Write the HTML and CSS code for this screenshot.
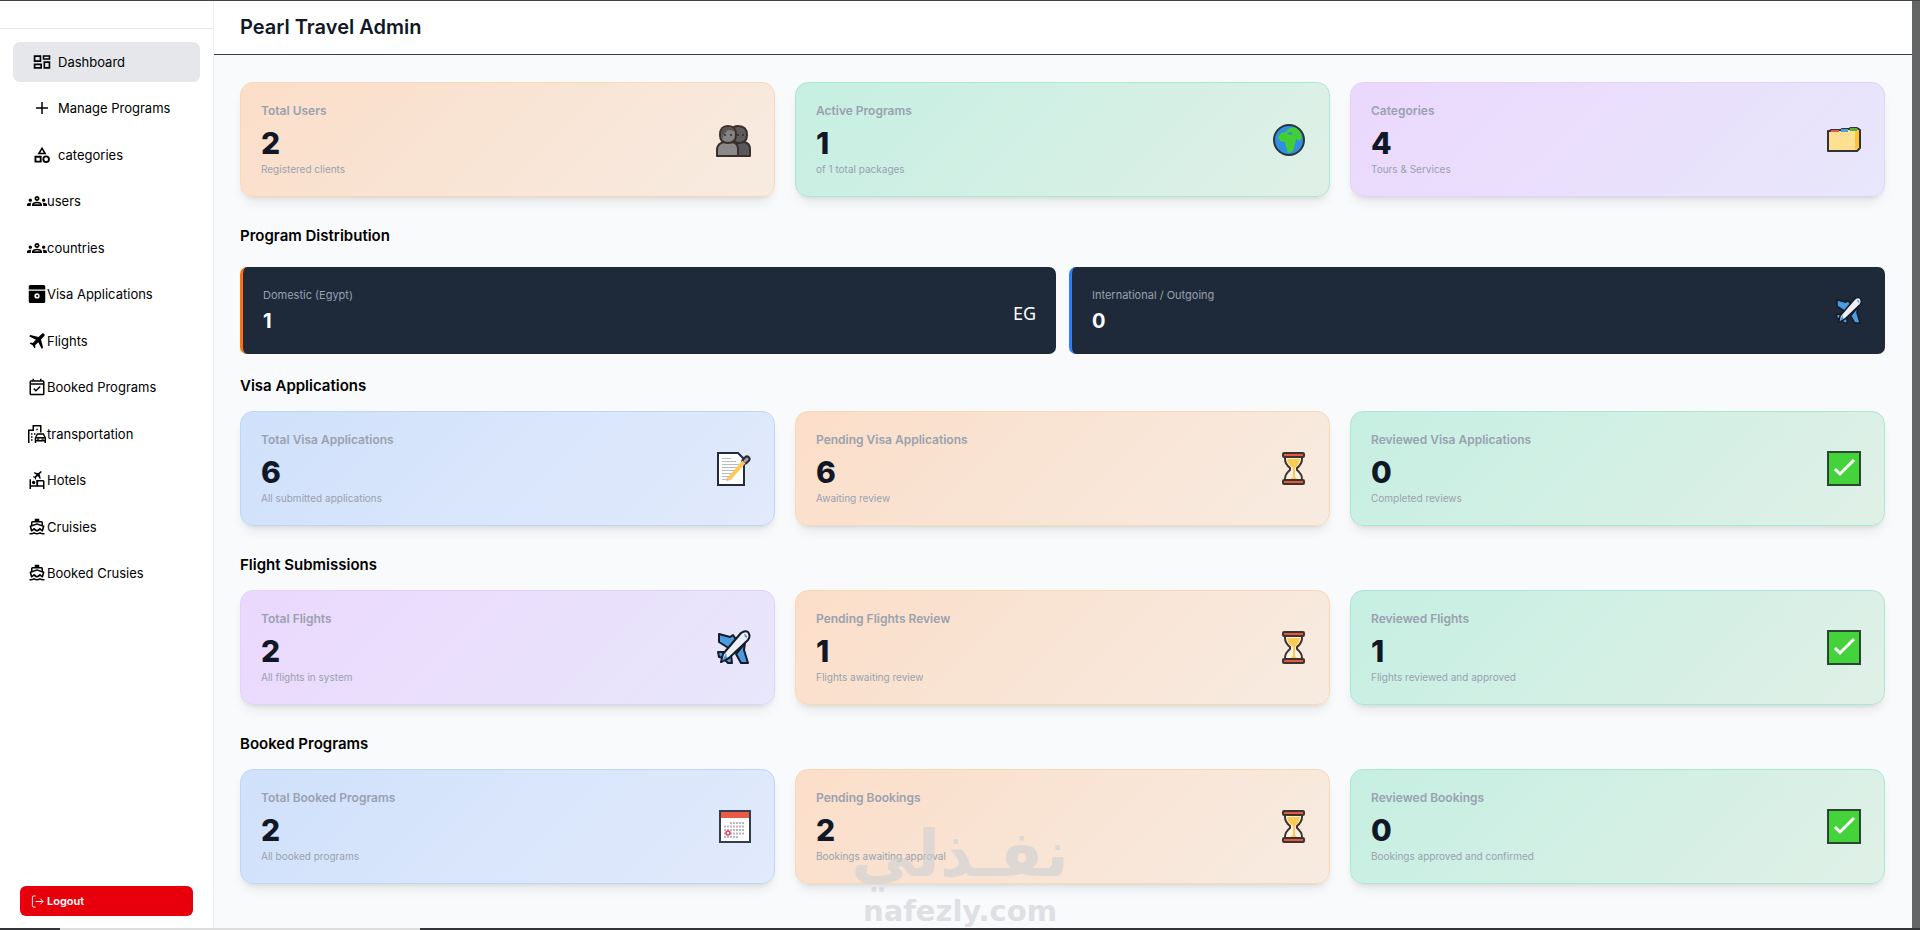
FILE: index.html
```
<!DOCTYPE html>
<html lang="en">
<head>
<meta charset="utf-8">
<title>Pearl Travel Admin</title>
<meta name="viewport" content="width=device-width, initial-scale=1">
<link rel="stylesheet" href="styles.css">
</head>
<body>
<svg class="defs" aria-hidden="true">
  <symbol id="i-dash" viewBox="0 0 24 24"><path fill-rule="evenodd" d="M1 3h10v9H1zM3.200 5.200v4.600h5.600V5.200zM13 3h10v6H13zM15 5v2h6V5zM1 14h11v7H1zM3.200 16.200v2.600h6.600v-2.600zM14 11h9v10h-9zM16.200 13.200v5.600h4.600v-5.600z"/></symbol>
  <symbol id="i-plus" viewBox="0 0 24 24"><path d="M11 4h2v7h7v2h-7v7h-2v-7H4v-2h7z"/></symbol>
  <symbol id="i-cat" viewBox="0 0 24 24"><path d="m12 1-6 10h12zm0 4L14.200 9H9.800zM17.500 12.500a5 5 0 1 0 0 10 5 5 0 0 0 0-10m0 7.500a2.500 2.500 0 0 1 0-5 2.500 2.500 0 0 1 0 5M2 22h9.500v-9H2zm2.500-6.500H9v4H4.500z" fill-rule="evenodd"/></symbol>
  <symbol id="i-users" viewBox="0 0 24 24"><path fill-rule="evenodd" d="M4 13c1.100 0 2-.9 2-2s-.9-2-2-2-2 .9-2 2 .9 2 2 2m1.130 1.100A7 7 0 0 0 4 14c-.99 0-1.930.21-2.780.58A2.010 2.010 0 0 0 0 16.430V18h4.500v-1.610c0-.83.23-1.610.63-2.290M20 13c1.100 0 2-.9 2-2s-.9-2-2-2-2 .9-2 2 .9 2 2 2m4 3.430c0-.81-.48-1.530-1.220-1.850A7 7 0 0 0 20 14c-.39 0-.76.040-1.130.1.400.68.630 1.460.630 2.290V18H24zM16.240 13.650A10.500 10.500 0 0 0 12 12.750c-1.630 0-3.070.39-4.240.9A2.990 2.990 0 0 0 6 16.390V18h12v-1.610c0-1.180-.68-2.260-1.760-2.740M8.070 16c.09-.23.13-.39.91-.69a8.400 8.400 0 0 1 6.040 0c.77.300.81.460.91.690zM12 6c-1.660 0-3 1.340-3 3s1.340 3 3 3 3-1.340 3-3-1.340-3-3-3m0 4a1 1 0 1 1 0-2 1 1 0 0 1 0 2"/></symbol>
  <symbol id="i-visa" viewBox="0 0 24 24"><path fill-rule="evenodd" d="M3 0h18a2 2 0 0 1 2 2v4H1V2a2 2 0 0 1 2-2M1 7.500h22V22a2 2 0 0 1-2 2H3a2 2 0 0 1-2-2zM12 11a3.500 3.500 0 1 0 0 7 3.500 3.500 0 0 0 0-7m0 2 2 .5-1.200 1 1.200 1-2 .5-1.500-1.500z"/></symbol>
  <symbol id="i-flight" viewBox="0 0 24 24"><path d="M21.500 2.500c-.9-.9-2.400-.9-3.300 0L14 6.700 3.200 3.900 1.500 5.600l9 4.700-4.100 4.200-2.900-.4-1.300 1.300 4 2.400 2.400 4 1.300-1.300-.4-2.900 4.200-4.100 4.700 9 1.700-1.700L17.300 10l4.200-4.200c.9-.9.9-2.400 0-3.300z"/></symbol>
  <symbol id="i-book" viewBox="0 0 24 24"><path fill-rule="evenodd" d="M20 3h-2V1h-2v2H8V1H6v2H4a2 2 0 0 0-2 2v16a2 2 0 0 0 2 2h16a2 2 0 0 0 2-2V5a2 2 0 0 0-2-2M4 21V9h16v12zM4 7V5h16v2zm6.560 11.400 6.430-6.430-1.400-1.400-5.030 5.030-2.110-2.110-1.400 1.400z"/></symbol>
  <symbol id="i-trans" viewBox="0 0 24 24"><path fill-rule="evenodd" d="M6 0h12v10h-2V2H8v6H2v16H0V6h6zM11 5h2v2h-2zM4 11h2v2H4zm0 4h2v2H4zm0 4h2v2H4zm4-8h2v2H8zM12 11h9l3 6v7h-2v-2H11v2H9v-7zm1 2-1.500 3h10L20 13zm-2 5v2h11v-2zm1 .3h3v1.400h-3zm6 0h3v1.400h-3z"/></symbol>
  <symbol id="i-hotel" viewBox="0 0 24 24"><path fill-rule="evenodd" d="M17 0l1.500 1.200L15.500 4l1.500 6-1.200.8-2.600-4.200-2.500 2.200.2 1.900-1 .8-1.200-2.500-2.400-1.100.9-.9 1.900.2L11.300 5 7.500 2.800l1-1.100 5 1.300zM2 11h2v8h7v-7h9a2 2 0 0 1 2 2v10h-2v-3H4v3H2zM7.500 13a2.300 2.300 0 1 1 0 4.600 2.300 2.300 0 0 1 0-4.600m6 1v5H20v-5z"/></symbol>
  <symbol id="i-ship" viewBox="0 0 24 24"><path fill-rule="evenodd" d="M9 1h6v3h3a2 2 0 0 1 2 2v3.600l1.300.4c.5.200.8.700.6 1.300L20 18c-1.600 0-3-.8-4-2-1 1.200-2.400 2-4 2s-3-.8-4-2c-1 1.200-2.400 2-4 2l-1.900-6.700c-.2-.5.100-1.100.6-1.300L4 9.600V6a2 2 0 0 1 2-2h3zM6 6v3l6-2 6 2V6zm6 3.100L4.400 11.500l1.100 3.800L8 13l4 3 4-3 2.500 2.300 1.100-3.800zM2 20h2c1.400 0 2.800-.4 4-1.200a7.300 7.300 0 0 0 8 0c1.200.8 2.600 1.200 4 1.200h2v2h-2c-1.400 0-2.700-.3-4-1-2.500 1.300-5.500 1.300-8 0-1.300.7-2.600 1-4 1H2z"/></symbol>
  <symbol id="e-people" viewBox="0 0 40 40"><g stroke="#39302c" stroke-width="2" stroke-linejoin="round"><path fill="#59575a" d="M20 36V28q1-5 7-6h3q6 1 6 7v7z"/><path fill="#8c8788" d="M3 36v-7q1-6 7-7h8q6 1 6 7v7z"/><path fill="#5d5b5c" d="M18 9q2-3 6-3 9 0 9 9 0 8-8 8-5 0-7-5z"/><path fill="#858283" d="M6 15q0-9 8-9t8 9q0 8-8 8t-8-8z"/></g><path fill="#5b5655" d="M7 14q0-7 7-7 5 0 6 4l-6-1-4 4-2 5q-1-2-1-5z"/><g fill="#302b29"><circle cx="11" cy="15" r="1"/><circle cx="17" cy="15" r="1"/><circle cx="24" cy="15" r="1"/><circle cx="29" cy="15" r="1"/></g></symbol>
  <symbol id="e-globe" viewBox="0 0 40 40"><circle cx="20" cy="20" r="15" fill="#308fe0"/><path fill="#44ce36" d="M21 8l5-1 5 4 2 7-3 3-3-2-1 5-2 7-5 2-2-6-1-5-5-1-2-4 3-4 5-1 2-2-3 1z"/><path fill="#308fe0" d="m18 13 4-1 2 2-3 1z"/><circle cx="20" cy="20" r="15" fill="none" stroke="#29353c" stroke-width="2"/></symbol>
  <symbol id="e-folder" viewBox="0 0 40 40"><path fill="#ffdf91" stroke="#343333" stroke-width="2" stroke-linejoin="round" d="M4 11h2l1-1h10l1-1h7l2-1h6l3 2v18l-3 3H4z"/><path fill="#ffc337" d="M31 11l4-1v17l-4 3z"/><path fill="#ea5a47" d="M7 10h8v3H7z"/><path fill="#51a1dc" d="M17 9h7v3h-7z"/><path fill="#55b13a" d="M26 8h7v3h-7z"/><path fill="#ffdf91" d="M5 12h26v18H5z"/></symbol>
  <symbol id="e-check" viewBox="0 0 40 40"><path fill="#45d33b" stroke="#2c4634" stroke-width="2" d="M4 3h32v33H4z"/><path fill="none" stroke="#fff" stroke-width="3" d="m11 20 5 5L30 11"/></symbol>
  <symbol id="e-glass" viewBox="0 0 40 40"><path fill="#fdf2e4" stroke="#40332e" stroke-width="2" d="M16 5v5q0 5 5 9v2q-5 4-5 9v5h17v-5q0-5-5-9v-2q5-4 5-9V5z"/><path fill="#fcca50" d="M18 10h13q-1 6-5 9h-2q-5-3-6-9zM24 18h2v10l4 4H19l5-4z"/><g fill="#df5a43" stroke="#40332e" stroke-width="2"><rect x="14" y="4" width="21" height="4" rx="1"/><rect x="14" y="31" width="21" height="4" rx="1"/></g></symbol>
  <symbol id="e-note" viewBox="0 0 40 40"><path fill="#fff" stroke="#242b3b" stroke-width="2" d="M4 4h20l6 6v26H4z"/><path stroke="#b7bac0" d="M8 9.500h9M8 12.500h14M8 15.500h17M8 18.500h16M8 21.500h13M8 24.500h11M8 27.500h9M8 30.500h6"/><path stroke="#242b3b" stroke-width="7" stroke-linecap="round" d="m31 12 2-2"/><path stroke="#fcca50" stroke-width="4" d="M15 30 30 13"/><path stroke="#b59d9f" stroke-width="3" stroke-linecap="round" d="m31 12 2-2"/><path fill="#e9b58c" d="m12 32 1-4 3 3z"/></symbol>
  <symbol id="e-cal" viewBox="0 0 40 40"><path fill="#fff" stroke="#343d4b" stroke-width="2" d="M6 4h30v31H6z"/><path fill="#ea5a47" d="M7 5h28v6H7z"/><path stroke="#b4b7bd" stroke-width="2" stroke-dasharray="2 1" d="M16 16h15M10 19.500h21M10 23h21M10 26.500h21M10 30h15"/><circle cx="14" cy="26" r="2" fill="#fff" stroke="#ea3e62" stroke-width="1.500"/></symbol>
  <symbol id="e-plane" viewBox="0 0 40 40"><g stroke="#151c28" stroke-width="2" stroke-linejoin="round"><path fill="#4a9bdf" d="M5 6l11 3 3-2 2 3 5 1-10 10-11-7zM31 15l-1 7 4 13h-7l-5-9zM4 24h9l-3 6-5-1zM17 26l1 9h-4l-3-3z"/><path fill="#eceff3" d="M27 5q4-3 7-1 3 4 0 8L15 30l-8 4 2-8z"/></g><path fill="#4a9bdf" d="M30 6q3 0 3 4l-2-1zM8 33l4-8 1 5z"/></symbol>
</svg>

<div class="app">
  <aside class="sidebar">
    <div class="brand"></div>
    <nav class="nav" aria-label="Main">
      <a class="link inset active" href="#"><svg><use href="#i-dash"/></svg>Dashboard</a>
      <a class="link inset" href="#"><svg><use href="#i-plus"/></svg>Manage Programs</a>
      <a class="link inset" href="#"><svg><use href="#i-cat"/></svg>categories</a>
      <a class="link wide" href="#"><svg><use href="#i-users"/></svg>users</a>
      <a class="link wide" href="#"><svg><use href="#i-users"/></svg>countries</a>
      <a class="link" href="#"><svg><use href="#i-visa"/></svg>Visa Applications</a>
      <a class="link" href="#"><svg><use href="#i-flight"/></svg>Flights</a>
      <a class="link" href="#"><svg><use href="#i-book"/></svg>Booked Programs</a>
      <a class="link" href="#"><svg><use href="#i-trans"/></svg>transportation</a>
      <a class="link" href="#"><svg><use href="#i-hotel"/></svg>Hotels</a>
      <a class="link" href="#"><svg><use href="#i-ship"/></svg>Cruisies</a>
      <a class="link" href="#"><svg><use href="#i-ship"/></svg>Booked Crusies</a>
    </nav>
    <button class="logout" type="button"><svg viewBox="0 0 14 14"><path d="M5 1H3a1.500 1.500 0 0 0-1.500 1.500v9A1.500 1.500 0 0 0 3 13h2M5 7h8M10 4l3 3-3 3"/></svg>Logout</button>
  </aside>

  <div class="page">
    <header class="topbar"><h1>Pearl Travel Admin</h1></header>
    <main class="content">
      <section class="cards">
        <article class="card orange"><div><h3>Total Users</h3><p class="num">2</p><p class="sub">Registered clients</p></div><svg><use href="#e-people"/></svg></article>
        <article class="card green"><div><h3>Active Programs</h3><p class="num">1</p><p class="sub">of 1 total packages</p></div><svg><use href="#e-globe"/></svg></article>
        <article class="card purple"><div><h3>Categories</h3><p class="num">4</p><p class="sub">Tours &amp; Services</p></div><svg><use href="#e-folder"/></svg></article>
      </section>

      <h2 class="first">Program Distribution</h2>
      <section class="split">
        <article class="dark home"><div><h3>Domestic (Egypt)</h3><p>1</p></div><span class="flag">EG</span></article>
        <article class="dark abroad"><div><h3>International / Outgoing</h3><p>0</p></div><svg><use href="#e-plane"/></svg></article>
      </section>

      <h2>Visa Applications</h2>
      <section class="cards">
        <article class="card blue"><div><h3>Total Visa Applications</h3><p class="num">6</p><p class="sub">All submitted applications</p></div><svg><use href="#e-note"/></svg></article>
        <article class="card orange"><div><h3>Pending Visa Applications</h3><p class="num">6</p><p class="sub">Awaiting review</p></div><svg><use href="#e-glass"/></svg></article>
        <article class="card green"><div><h3>Reviewed Visa Applications</h3><p class="num">0</p><p class="sub">Completed reviews</p></div><svg><use href="#e-check"/></svg></article>
      </section>

      <h2>Flight Submissions</h2>
      <section class="cards">
        <article class="card purple"><div><h3>Total Flights</h3><p class="num">2</p><p class="sub">All flights in system</p></div><svg><use href="#e-plane"/></svg></article>
        <article class="card orange"><div><h3>Pending Flights Review</h3><p class="num">1</p><p class="sub">Flights awaiting review</p></div><svg><use href="#e-glass"/></svg></article>
        <article class="card green"><div><h3>Reviewed Flights</h3><p class="num">1</p><p class="sub">Flights reviewed and approved</p></div><svg><use href="#e-check"/></svg></article>
      </section>

      <h2>Booked Programs</h2>
      <section class="cards">
        <article class="card blue"><div><h3>Total Booked Programs</h3><p class="num">2</p><p class="sub">All booked programs</p></div><svg><use href="#e-cal"/></svg></article>
        <article class="card orange"><div><h3>Pending Bookings</h3><p class="num">2</p><p class="sub">Bookings awaiting approval</p></div><svg><use href="#e-glass"/></svg></article>
        <article class="card green"><div><h3>Reviewed Bookings</h3><p class="num">0</p><p class="sub">Bookings approved and confirmed</p></div><svg><use href="#e-check"/></svg></article>
      </section>
    </main>
  </div>
  <div class="scroll"></div>
</div>
<div class="taskbar"><span></span></div>
<div class="watermark"><span class="ar" lang="ar" dir="rtl">نفـذلي</span><span class="en">nafezly.com</span></div>
</body>
</html>
```
FILE: styles.css
```
* { box-sizing: border-box; }
body {
  margin: 0;
  min-height: 100vh;
  display: flex;
  flex-direction: column;
  position: relative;
  overflow: hidden;
  border-top: 1px solid #45434a;
  background: #f9fafb;
  color: #000;
  font-family: Inter, "Liberation Sans", sans-serif;
}
h1, h2, h3, p { margin: 0; }
.defs { position: absolute; width: 0; height: 0; }
.app { flex: 1; display: flex; }

.sidebar {
  width: 214px;
  flex: none;
  display: flex;
  flex-direction: column;
  background: #fff;
  border-right: 1px solid #eceef0;
}
.brand { height: 28px; border-bottom: 1px solid #e5e7eb; }
.nav {
  min-height: 580px;
  padding: 13px 13px 15px;
  display: flex;
  flex-direction: column;
  justify-content: space-between;
}
.link {
  height: 40px;
  padding: 0 0 1px 15px;
  display: flex;
  align-items: center;
  gap: 1px;
  border-radius: 7px;
  color: #000;
  font-size: 13px;
  text-decoration: none;
}
.link svg { width: 18px; height: 18px; }
.wide { padding-left: 14px; gap: 0; }
.wide svg { width: 20px; height: 20px; }
.inset { padding-left: 20px; gap: 7px; }
.active { background: #e5e7eb; }
.logout {
  margin: auto 20px 12px;
  height: 30px;
  padding: 0 11px;
  display: flex;
  align-items: center;
  gap: 3px;
  border: 0;
  border-radius: 6px;
  background: #e7000b;
  color: #fff;
  font: 600 11px Inter, "Liberation Sans", sans-serif;
}
.logout svg { width: 13px; height: 13px; fill: none; stroke: #fff; stroke-width: 1; }

.page { flex: 1; min-width: 0; }
.topbar {
  height: 54px;
  padding: 0 0 2px 26px;
  display: flex;
  align-items: center;
  background: #fff;
  border-bottom: 1px solid #3b3e47;
}
h1 { color: #101828; font-size: 20px; line-height: 28px; font-weight: 600; }
.content { padding: 27px 27px 40px 26px; }
h2 { margin: 27px 0 13px; font-size: 15px; line-height: 24px; font-weight: 600; }
h2.first { margin: 27px 0 19px; }
.cards { display: grid; grid-template-columns: repeat(3, 1fr); gap: 20px; }
.card {
  height: 115px;
  padding: 0 20px;
  display: flex;
  align-items: center;
  justify-content: space-between;
  border: 1px solid;
  border-radius: 13px;
  box-shadow: 0 8px 12px -3px rgba(0, 0, 0, .08), 0 3px 5px -3px rgba(0, 0, 0, .12);
}
.card svg { width: 40px; height: 40px; }
.card h3 { color: #99a1af; font-size: 12px; line-height: 16px; font-weight: 600; }
.num { margin: 6px 0 1px; color: #101828; font-size: 30px; line-height: 36px; font-weight: 800; }
.sub { color: #99a1af; font-size: 10px; line-height: 14px; }
.orange { background: linear-gradient(135deg, #fbdec9, #f7ebe1); border-color: #f9d8b4; }
.green { background: linear-gradient(135deg, #c6efe2, #e0f0e7); border-color: #a9e8d1; }
.purple { background: linear-gradient(135deg, #ebd8fd, #e8e7fb); border-color: #e0d2fa; }
.blue { background: linear-gradient(135deg, #d0e1fb, #e2eafc); border-color: #bfd6f5; }

.split { display: grid; grid-template-columns: 1fr 1fr; gap: 13px; }
.split + h2 { margin-top: 20px; }
.dark {
  height: 87px;
  padding: 0 20px;
  display: flex;
  align-items: center;
  justify-content: space-between;
  border-left: 3px solid;
  border-radius: 7px;
  background: #1e2939;
}
.home { border-color: #f97316; }
.abroad { border-color: #2b7fff; }
.dark h3 { color: #99a1af; font-size: 11px; line-height: 18px; font-weight: 400; }
.dark p { margin-top: 3px; color: #fff; font-size: 20px; line-height: 28px; font-weight: 700; }
.dark svg { width: 32px; height: 32px; }
.flag { padding-top: 5px; color: #fff; font: 18px "Noto Sans", "Open Sans", sans-serif; }

.scroll { width: 8px; flex: none; background: #646665; }
.taskbar { height: 2px; padding-left: 60px; background: #333437; }
.taskbar span { display: block; width: 360px; height: 2px; background: #ddd; }
.watermark {
  position: absolute;
  left: 854px;
  bottom: 2px;
  width: 212px;
  display: flex;
  flex-direction: column;
  align-items: center;
  gap: 8px;
  color: #cdd0d4;
  opacity: .6;
  pointer-events: none;
}
.ar { font: 700 64px/64px "DejaVu Sans", sans-serif; white-space: nowrap; }
.en { font: 700 29px/34px "DejaVu Sans", sans-serif; white-space: nowrap; }
```
